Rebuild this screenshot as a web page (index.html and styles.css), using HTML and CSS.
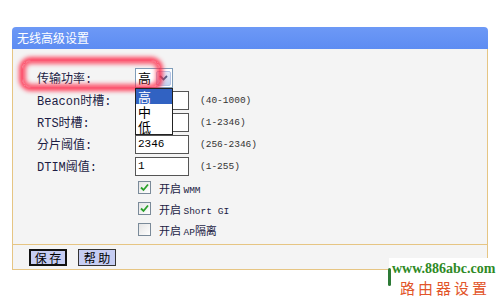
FILE: index.html
```html
<!DOCTYPE html>
<html>
<head>
<meta charset="utf-8">
<link rel="stylesheet" href="styles.css">
</head>
<body>
<div class="panel">
  <div class="title">无线高级设置</div>
  <div class="content">
    <div class="form">
      <div class="glow"></div>
      <div class="row">
        <span class="label">传输功率:</span>
        <div class="select"><span class="sel-val">高</span><span class="arrow"><svg width="9" height="6" viewBox="0 0 9 6"><path d="M1 1 L4.5 4.5 L8 1" fill="none" stroke="#4d6185" stroke-width="1.8"/></svg></span></div>
        <span></span>
      </div>
      <div class="row">
        <span class="label">Beacon时槽:</span>
        <div class="input"></div>
        <span class="range">(40-1000)</span>
      </div>
      <div class="row">
        <span class="label">RTS时槽:</span>
        <div class="input"></div>
        <span class="range">(1-2346)</span>
      </div>
      <div class="row">
        <span class="label">分片阈值:</span>
        <div class="input">2346</div>
        <span class="range">(256-2346)</span>
      </div>
      <div class="row">
        <span class="label">DTIM阈值:</span>
        <div class="input">1</div>
        <span class="range">(1-255)</span>
      </div>
      <div class="check-row"><span class="cb"><svg width="11" height="11" viewBox="0 0 11 11"><path d="M2 5.5 L4.5 8 L9 2.5" fill="none" stroke="#2aa02a" stroke-width="1.8"/></svg></span><span class="ct">开启 <span class="en">WMM</span></span></div>
      <div class="check-row"><span class="cb"><svg width="11" height="11" viewBox="0 0 11 11"><path d="M2 5.5 L4.5 8 L9 2.5" fill="none" stroke="#2aa02a" stroke-width="1.8"/></svg></span><span class="ct">开启 <span class="en">Short GI</span></span></div>
      <div class="check-row"><span class="cb"></span><span class="ct">开启 <span class="en">AP</span>隔离</span></div>
      <div class="list">
        <div class="opt active">高</div>
        <div class="opt">中</div>
        <div class="opt">低</div>
      </div>
    </div>
  </div>
  <div class="footer">
    <span class="btn focus">保 存</span>
    <span class="btn">帮 助</span>
  </div>
</div>
<div class="wm">
  <span class="wm-leaf"></span>
  <div class="wm-url">www.886abc.com</div>
  <div class="wm-cn">路由器设置</div>
</div>
</body>
</html>
```
FILE: styles.css
```css
html, body { margin: 0; padding: 0; background: #fff; }
body { width: 500px; height: 300px; overflow: hidden; position: relative;
  font-family: "Liberation Mono", "Noto Sans CJK SC", monospace; }
.panel { margin: 27px 0 0 12px; width: 476px; }
.title { height: 22px; line-height: 21px; background: linear-gradient(#6d99f6, #5d8cf2);
  border-radius: 4px 4px 0 0; color: #fff; font-family: "Noto Sans CJK SC", sans-serif;
  font-size: 12px; padding-left: 5px; }
.content { background: #f4f4f4; border: 1px solid #e6c583; border-top: none; border-bottom: none;
  height: 195px; }
.form { position: relative; padding: 18px 0 0 24px; }
.row { display: grid; grid-template-columns: 98px 65px auto; align-items: center; height: 22px; }
.label { font-size: 12px; color: #1c1c44; white-space: nowrap; }
.range { font-size: 9.5px; color: #333; }
.input { width: 50px; height: 17px; border: 1px solid #555; background: #fff;
  font-size: 11px; line-height: 17px; padding-left: 2px; box-sizing: content-box; color: #000; }
.select { width: 33px; height: 18px; border: 1px solid #7f9db9; background: #fff; display: flex;
  align-items: center; justify-content: space-between; padding: 0 1px 0 2px; }
.sel-val { font-family: "Noto Sans CJK SC", sans-serif; font-size: 13px; line-height: 18px; color: #000; }
.arrow { width: 15px; height: 15px; background: linear-gradient(#e6ecfa, #c5d2ef); border: 1px solid #b4c4e6;
  box-sizing: border-box; display: flex; align-items: center; justify-content: center; border-radius: 2px; }
.check-row { display: flex; align-items: center; height: 21px; padding-left: 101px; }
.check-row:first-of-type { margin-top: -1px; }
.cb { width: 11px; height: 11px; border: 1px solid #7a8a99; background: linear-gradient(135deg, #e4e4e4, #fff);
  display: flex; align-items: center; justify-content: center; }
.ct { margin-left: 8px; font-size: 11px; color: #1c1c44; font-family: "Noto Sans CJK SC", sans-serif; }
.en { font-family: "Liberation Mono", monospace; font-size: 9.5px; }
.glow { position: absolute; left: 9px; top: 11px; width: 136px; height: 26px; border-radius: 9px;
  border: 1px solid rgba(255, 20, 60, 0.7);
  box-shadow: 0 0 4px 3px rgba(255, 40, 70, 0.85), inset 0 0 4px 3px rgba(255, 40, 70, 0.75); }
.list { position: absolute; left: 122px; top: 39px; width: 36px; background: #fff; border: 1px solid #222; }
.opt { height: 15px; line-height: 15px; font-family: "Noto Sans CJK SC", sans-serif; font-size: 13px;
  padding-left: 2px; color: #000; }
.opt.active { background: #3162c2; color: #fff; }
.footer { border: 1px solid #e6c583; background: #f4f4f4; height: 24px; display: flex; align-items: center;
  gap: 11px; padding-left: 16px; }
.btn { display: inline-block; width: 36px; height: 15px; line-height: 15px; text-align: center;
  background: #c6cdf2; border: 1px solid #333; font-family: "Noto Sans CJK SC", sans-serif; font-size: 12px; color: #000; }
.btn.focus { border: 2px solid #111; width: 34px; height: 13px; line-height: 13px; }
.wm { position: absolute; left: 389px; top: 258px; width: 111px; height: 42px; background: #fff; }
.wm-leaf { position: absolute; left: -1px; top: 10px; width: 3px; height: 18px; background: #2d7a36; border-radius: 2px; }
.wm-url { margin: 3px 0 0 3px; font-family: "Liberation Serif", serif; font-weight: bold; font-size: 14px;
  color: #2f8a26; line-height: 16px; }
.wm-cn { margin: 2px 0 0 11px; font-family: "Noto Sans CJK SC", sans-serif; font-size: 15px; letter-spacing: 3px;
  color: #e2552a; line-height: 18px; }
```
